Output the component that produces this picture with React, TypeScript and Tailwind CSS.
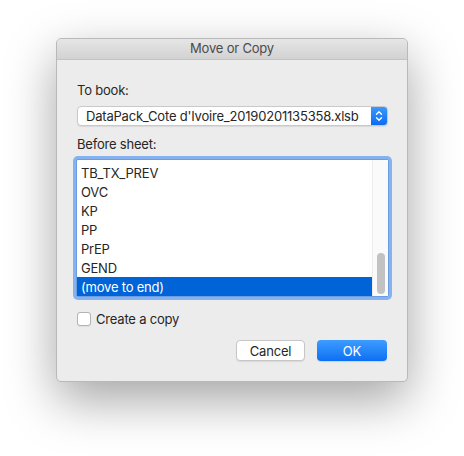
const sheets = ['TB_TX_PREV', 'OVC', 'KP', 'PP', 'PrEP', 'GEND', '(move to end)'];

function Stepper() {
  return (
    <svg width="8" height="12" viewBox="0 0 8 12" fill="none" stroke="white" strokeWidth="1.4" strokeLinecap="round" strokeLinejoin="round">
      <path d="M1.5 4.2 4 1.7 6.5 4.2" />
      <path d="M1.5 7.8 4 10.3 6.5 7.8" />
    </svg>
  );
}

export default function App() {
  return (
    <div
      className="flex h-[456px] w-[464px] items-start bg-white pl-[56px] pt-[38px] text-[13px] tracking-[-0.2px] text-[#262626]"
      style={{ fontFamily: 'Inter, "Liberation Sans", sans-serif' }}
    >
      <div className="flex h-[344px] w-[352px] flex-col overflow-hidden rounded-[5px] border border-[#b9b9b9] bg-[#ececec] shadow-[0_18px_50px_rgba(0,0,0,0.36)]">
        {/* title bar */}
        <div className="flex h-[21px] shrink-0 items-center justify-center border-b border-[#c4c4c4] bg-gradient-to-b from-[#e6e6e6] to-[#d2d2d2] text-[13px] text-[#4b4b4b]">
          Move or Copy
        </div>

        <div className="flex flex-1 flex-col px-[20px] pt-[22px]">
          <div className="leading-[16px]">To book:</div>

          <div className="mt-[8px] flex h-[20px] w-[311px] items-stretch overflow-hidden rounded-[4px] border border-[#c9c9c9] bg-white shadow-[0_1px_1px_rgba(0,0,0,0.08)]">
            <div className="flex flex-1 items-center whitespace-nowrap pl-[8px] leading-[16px]">
              DataPack_Cote d'Ivoire_20190201135358.xlsb
            </div>
            <div className="flex w-[16px] items-center justify-center bg-gradient-to-b from-[#3a98fd] to-[#0a6cf0]">
              <Stepper />
            </div>
          </div>

          <div className="mt-[10px] leading-[16px]">Before sheet:</div>

          <div className="-ml-[4px] mt-[4px] w-[319px] rounded-[5px] bg-[#86b3ef] p-[3px]">
            <div className="flex h-[138px] rounded-[2px] border border-[#6b9de2] bg-white">
              <div className="flex flex-1 flex-col pt-[3px]">
                {sheets.map((s, i) => {
                  const sel = i === sheets.length - 1;
                  return (
                    <div
                      key={s}
                      className={`flex h-[19px] items-center pl-[4px] leading-[16px] ${
                        sel ? 'bg-[#0064d8] text-white' : 'text-[#262626]'
                      }`}
                    >
                      {s}
                    </div>
                  );
                })}
              </div>
              <div className="flex w-[16px] flex-col justify-end border-l border-[#ececec] bg-[#fafafa] px-[4px] pb-[2px]">
                <div className="h-[41px] w-[8px] rounded-full bg-[#c2c2c2]" />
              </div>
            </div>
          </div>

          <div className="mt-[11px] flex items-center gap-[5px]">
            <div className="h-[14px] w-[14px] rounded-[3px] border border-[#b3b3b3] bg-white shadow-[0_1px_1px_rgba(0,0,0,0.06)]" />
            <span className="leading-[16px]">Create a copy</span>
          </div>

          <div className="mt-[13px] flex justify-end gap-[12px]">
            <button className="flex h-[21px] w-[69px] items-center justify-center rounded-[4px] border border-[#c6c6c6] bg-white leading-[16px] text-[#262626] shadow-[0_1px_1px_rgba(0,0,0,0.08)]">
              Cancel
            </button>
            <button className="flex h-[21px] w-[70px] items-center justify-center rounded-[4px] bg-gradient-to-b from-[#3d9cfe] to-[#0a6ff4] leading-[16px] text-white shadow-[0_1px_1px_rgba(0,0,0,0.12)]">
              OK
            </button>
          </div>
        </div>
      </div>
    </div>
  );
}
